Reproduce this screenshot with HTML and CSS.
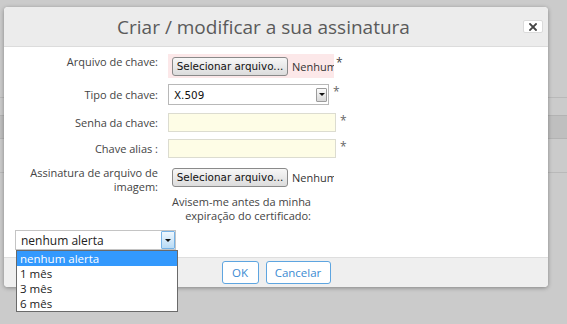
FILE: index.html
```html
<!DOCTYPE html>
<html lang="pt">
<head>
    <meta charset="UTF-8">
    <meta name="viewport" content="width=device-width, initial-scale=1.0">
    <title>Criar / modificar a sua assinatura</title>
    <link rel="stylesheet" href="styles.css">
</head>
<body>
    <!-- page behind the dialog -->
    <div class="backdrop">
        <div class="bg-row first"></div>
        <div class="bg-band"></div>
        <div class="bg-row tall"></div>
        <div class="bg-row"></div>
    </div>

    <div class="dialog">
        <div class="dialog-header">
            <h1>Criar / modificar a sua assinatura</h1>
            <button class="close-btn" type="button">
                <svg width="8" height="8" viewBox="0 0 8 8"><path d="M1 1L7 7M7 1L1 7" stroke="#444" stroke-width="1.8" stroke-linecap="square"/></svg>
            </button>
        </div>

        <div class="dialog-body">
            <div class="form-row row-key">
                <label class="label-top">Arquivo de chave:</label>
                <div class="file-input invalid">
                    <span class="file-btn">Selecionar arquivo...</span>
                    <span class="file-name">Nenhum</span>
                </div>
                <span class="req">*</span>
            </div>

            <div class="form-row row-type">
                <label>Tipo de chave:</label>
                <div class="combo">
                    <span class="combo-text">X.509</span>
                    <span class="combo-arrow"><i class="tri"></i></span>
                </div>
                <span class="req">*</span>
            </div>

            <div class="form-row row-pass">
                <label>Senha da chave:</label>
                <div class="text-input"></div>
                <span class="req">*</span>
            </div>

            <div class="form-row row-alias">
                <label>Chave alias :</label>
                <div class="text-input"></div>
                <span class="req">*</span>
            </div>

            <div class="form-row row-image">
                <label class="label-two">Assinatura de arquivo de imagem:</label>
                <div class="file-input">
                    <span class="file-btn">Selecionar arquivo...</span>
                    <span class="file-name">Nenhum</span>
                </div>
            </div>

            <div class="notice">Avisem-me antes da minha<br>expiração do certificado:</div>

            <div class="alert-row">
                <div class="combo alert-combo">
                    <span class="combo-text">nenhum alerta</span>
                    <span class="combo-arrow active"><i class="tri"></i></span>
                    <ul class="listbox">
                        <li class="selected">nenhum alerta</li>
                        <li>1 mês</li>
                        <li>3 mês</li>
                        <li>6 mês</li>
                    </ul>
                </div>
            </div>
        </div>

        <div class="dialog-footer">
            <button class="btn btn-ok" type="button">OK</button>
            <button class="btn btn-cancel" type="button">Cancelar</button>
        </div>
    </div>
</body>
</html>
```

FILE: styles.css
```css
/* General Reset */
body {
    margin: 0;
    height: 324px;
    overflow: hidden;
    background-color: #cbcbcb;
    font-family: "Open Sans", "Liberation Sans", sans-serif;
    color: #444;
}

/* page behind the dialog */
.backdrop {
    padding-top: 97px;
}

.bg-row {
    height: 17px;
    border-top: 1px solid #b9b9b9;
}

.bg-row.tall {
    height: 33px;
    border-top: none;
}

.bg-band {
    height: 22px;
    background-color: #bfbfbf;
    border-top: 1px solid #b3b3b3;
    border-bottom: 1px solid #b3b3b3;
}

/* dialog */
.dialog {
    position: absolute;
    left: 4px;
    top: 7px;
    width: 544px;
    height: 280px;
    display: flex;
    flex-direction: column;
    background: #fff;
    border-radius: 4px;
    box-shadow: 0 1px 4px rgba(0, 0, 0, 0.35);
}

.dialog-header {
    height: 40px;
    box-sizing: border-box;
    display: flex;
    align-items: center;
    padding-right: 5px;
    background-color: #ececec;
    border-bottom: 1px solid #dcdcdc;
    border-radius: 4px 4px 0 0;
}

.dialog-header h1 {
    flex: 1;
    margin: 0;
    text-align: center;
    font-size: 19px;
    font-weight: 400;
    line-height: 24px;
    color: #5a5a5a;
}

.close-btn {
    width: 20px;
    height: 13px;
    padding: 0;
    display: flex;
    align-items: center;
    justify-content: center;
    background: #fff;
    border: 1px solid #dadada;
    border-radius: 2px;
}

.dialog-body {
    flex: 1;
    padding-top: 7px;
}

/* form rows */
.form-row {
    display: flex;
    align-items: center;
}

.form-row label {
    width: 154px;
    margin-right: 10px;
    text-align: right;
    font-size: 11px;
    line-height: 16px;
    color: #444;
}

.form-row .label-top {
    align-self: flex-start;
    padding-top: 0;
}

.row-type {
    margin-top: 6px;
}

.row-pass {
    margin-top: 8px;
}

.row-alias {
    margin-top: 7px;
}

.row-image {
    margin-top: 8px;
    align-items: flex-start;
}

.form-row .label-two {
    line-height: 14px;
}

.req {
    align-self: flex-start;
    margin-left: 4px;
    font-size: 12px;
    line-height: 16px;
    color: #666;
}

.row-key .req {
    margin-left: 2px;
    padding-top: 1px;
    color: #444;
}

/* file input */
.file-input {
    width: 166px;
    height: 24px;
    box-sizing: border-box;
    display: flex;
    align-items: center;
    padding-left: 4px;
    overflow: hidden;
    white-space: nowrap;
}

.file-input.invalid {
    background-color: #fce8e9;
}

.row-image .file-input {
    height: 22px;
}

.file-btn {
    flex: none;
    width: 116px;
    height: 19px;
    box-sizing: border-box;
    text-align: center;
    font-family: "DejaVu Sans", sans-serif;
    font-size: 10.4px;
    line-height: 17px;
    color: #111;
    border: 1px solid #8a8a8a;
    border-radius: 3px;
    background: linear-gradient(#f7f7f7, #dcdcdc);
}

.file-name {
    margin-left: 4px;
    font-size: 11px;
    color: #333;
}

/* combo boxes */
.combo {
    position: relative;
    width: 161px;
    height: 21px;
    box-sizing: border-box;
    display: flex;
    align-items: center;
    justify-content: space-between;
    background: #fff;
    border: 1px solid #b8b8b8;
}

.combo-text {
    padding-left: 5px;
    font-family: "DejaVu Sans", sans-serif;
    font-size: 10.4px;
    color: #111;
}

.combo-arrow {
    width: 11px;
    height: 14px;
    margin-right: 1px;
    box-sizing: border-box;
    display: flex;
    align-items: center;
    justify-content: center;
    border: 1px solid #9c9c9c;
    border-radius: 1px;
    background: linear-gradient(#fbfbfb, #d8d8d8);
}

.tri {
    width: 0;
    height: 0;
    border-left: 3px solid transparent;
    border-right: 3px solid transparent;
    border-top: 3px solid #111;
}

.text-input {
    width: 168px;
    height: 19px;
    box-sizing: border-box;
    background-color: #fefde6;
    border: 1px solid #dcdcd0;
}

.notice {
    width: 307px;
    margin-top: 1px;
    text-align: right;
    font-size: 11px;
    line-height: 14px;
    color: #444;
}

.alert-row {
    margin-top: 7px;
    padding-left: 11px;
}

.alert-combo {
    height: 20px;
    border-color: #c4c4c4;
}

.alert-combo .combo-text {
    font-family: "Open Sans", sans-serif;
    font-size: 12px;
    color: #222;
}

.combo-arrow.active {
    width: 14px;
    height: 18px;
    margin-right: 0;
    border-color: #75b2e6;
    background: linear-gradient(#eef7fe, #b8dbf6);
}

.listbox {
    position: absolute;
    left: 0;
    top: 100%;
    width: 162px;
    margin: 1px 0 0;
    padding: 0;
    list-style: none;
    box-sizing: border-box;
    background: #fff;
    border: 1px solid #6a6a6a;
    z-index: 2;
}

.listbox li {
    height: 15px;
    padding-left: 3px;
    font-size: 11.5px;
    line-height: 15px;
    color: #222;
}

.listbox li.selected {
    background-color: #3399fd;
    color: #fff;
}

/* footer */
.dialog-footer {
    height: 30px;
    box-sizing: border-box;
    display: flex;
    justify-content: center;
    align-items: flex-start;
    gap: 7px;
    padding-top: 3px;
    background-color: #efefef;
    border-top: 1px solid #dedede;
    border-radius: 0 0 4px 4px;
}

.btn {
    height: 23px;
    padding: 0;
    font-family: "Open Sans", sans-serif;
    font-size: 11.5px;
    color: #3b8bd2;
    background: #fff;
    border: 1px solid #5ea5e0;
    border-radius: 3px;
}

.btn-ok {
    width: 37px;
}

.btn-cancel {
    width: 65px;
}
```
